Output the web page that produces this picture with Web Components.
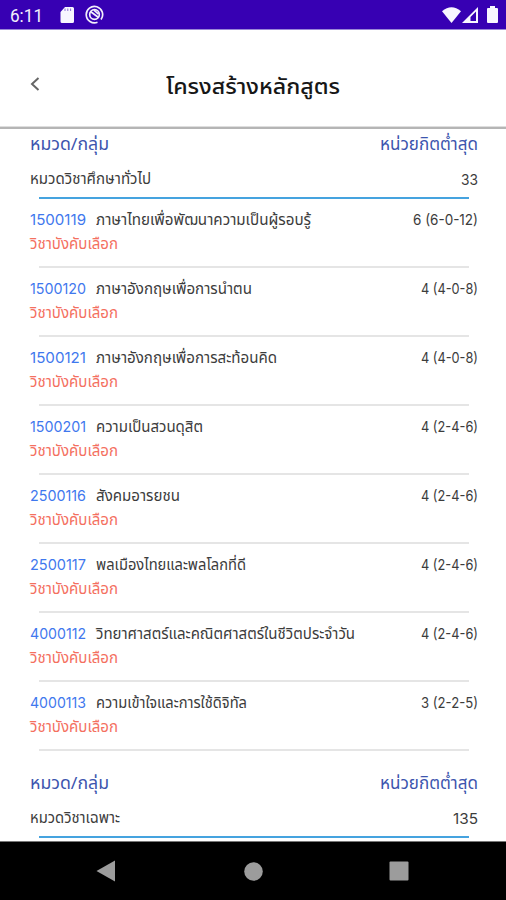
<!DOCTYPE html>
<html lang="th">
<head>
<meta charset="utf-8">
<title>โครงสร้างหลักสูตร</title>
<style>
html,body{margin:0;background:#fff}
body{width:506px;height:900px;overflow:hidden;font-family:"Noto Sans Thai","Noto Sans",Lato,sans-serif}
</style>
</head>
<body>
<course-app></course-app>
<script>
const define=(name,html,init)=>customElements.define(name,class extends HTMLElement{
  constructor(){super();this.attachShadow({mode:'open'})}
  connectedCallback(){this.shadowRoot.innerHTML=typeof html==='function'?html(this):html;if(init)init(this)}
});

/* A single line of text that is condensed or widened to the width in its "w" attribute. */
define('fit-text',`<style>:host{display:block;flex:none;white-space:nowrap;height:24px;line-height:24px}
span{display:inline-block;transform-origin:0 50%}</style><span></span>`,el=>{
  const s=el.shadowRoot.querySelector('span');s.textContent=el.getAttribute('t');
  const w=+el.getAttribute('w');el.style.width=w+'px';
  s.style.transform=`scaleX(${w/s.getBoundingClientRect().width})`;
});

define('status-bar',`<style>:host{display:flex;height:29px;background:#3700b3;border-bottom:1px solid #9a87d6;align-items:center;padding:0 8px 0 10px;color:#f2effb;font:17.5px Roboto,sans-serif}
svg{display:block;fill:#f8f6ff}.sd{margin:1px 0 0 17px}.n{margin-left:11px}.w{margin-left:auto}.s{margin:1px 0 0 1px}.b{margin-left:9px}fit-text{margin-top:2px}</style>
<fit-text t="6:11" w="33"></fit-text>
<svg class="sd" width="14" height="16" viewBox="0 0 14 16"><path d="M5 0h7.500A1.500 1.500 0 0 1 14 1.500V14.500a1.500 1.500 0 0 1-1.500 1.500H2A1.500 1.500 0 0 1 .5 14.500V5z"/><path d="M5 1.500v2.500M7.800 1.500v2.500M10.600 1.500v2.500" stroke="#8d70d6" stroke-width="1"/></svg>
<svg class="n" width="19" height="19" viewBox="0 0 19 19" style="fill:none;stroke:#f2effb;stroke-width:1.700"><path d="M12.500 17.200A8.200 8.200 0 1 1 16 14.500"/><circle cx="9.500" cy="9.500" r="4.800"/><path d="M5.500 6.500l8 6M9 5.200l4.500 4"/></svg>
<svg class="w" width="19" height="16" viewBox="0 0 19 16"><path d="M9.500 16L0 4.300Q9.500-3.800 19 4.300z"/></svg>
<svg class="s" width="16" height="16" viewBox="0 0 16 16"><path fill-rule="evenodd" d="M0 16L16 0V16zM8.500 14H14V4.500L8.500 10z"/></svg>
<svg class="b" width="11" height="17" viewBox="0 0 11 17"><path d="M3 0h5v2h2q1 0 1 1v13q0 1-1 1H1q-1 0-1-1V3q0-1 1-1h2z"/></svg>`);

define('title-bar',`<style>:host{display:grid;grid-template-columns:40px 1fr 40px;box-sizing:border-box;height:99px;border-bottom:2px solid #b5b5b5;align-items:start;padding:0 28px;color:#171717;font-size:22px;font-weight:500;box-shadow:inset 0 -1px #dedede}
svg{margin-top:46px;display:block}fit-text{margin:46px 0 0 98px}</style>
<svg width="13" height="16" viewBox="0 0 13 16"><path d="M10.500 2L4 8l6.500 6" fill="none" stroke="#666" stroke-width="2"/></svg>
<fit-text t="โครงสร้างหลักสูตร" w="174"></fit-text>`);

define('group-head',e=>`<style>:host{display:block;height:70px;padding:0 28px 0 30px;box-sizing:border-box}
div{display:flex;justify-content:space-between}.a{color:#3d55ae;font-size:17px;padding-top:4px}.b{color:#3c3c3c;font-size:15px;padding-top:11px}
.r{font-family:Inter,sans-serif;font-size:14.5px}
hr{border:0;height:2px;margin:5px 9px 0 9px;background:#45a3df}</style>
<div class="a"><fit-text t="หมวด/กลุ่ม" w="79"></fit-text><fit-text t="หน่วยกิตต่ำสุด" w="98"></fit-text></div>
<div class="b"><fit-text t="${e.getAttribute('name')}" w="${e.getAttribute('nw')}"></fit-text><fit-text class="r" t="${e.getAttribute('credit')}" w="${e.getAttribute('cw')}"></fit-text></div><hr>`);

define('course-row',e=>`<style>:host{display:block;height:69px;padding:10px 28px 0 30px;box-sizing:border-box;font-size:15px}
div{display:flex;color:#3c3c3c}.c{color:#3f78ee;margin-right:10px}.r{margin-left:auto}.k{color:#f4705f}
hr{border:0;height:2px;margin:9px 9px 0 9px;background:#e5e5e5}.c,.r{font-family:Inter,sans-serif;font-size:14.5px;margin-top:-1px}</style>
<div><fit-text class="c" t="${e.getAttribute('code')}" w="56"></fit-text><fit-text t="${e.getAttribute('name')}" w="${e.getAttribute('nw')}"></fit-text><fit-text class="r" t="${e.getAttribute('credit')}" w="${e.getAttribute('cw')}"></fit-text></div>
<div><fit-text class="k" t="วิชาบังคับเลือก" w="88"></fit-text></div><hr>`);

define('nav-bar',`<style>:host{display:flex;height:59px;background:#000;border-top:1px solid #777;box-sizing:border-box;align-items:center;padding:0 97px 0 96px;justify-content:space-between}svg{display:block;fill:#9c9c9c}</style>
<svg width="19" height="22" viewBox="0 0 19 22"><path d="M19 .5v21L.5 11z"/></svg>
<svg width="19" height="19" viewBox="0 0 19 19" style="margin-left:2px"><circle cx="9.500" cy="9.500" r="9.300"/></svg>
<svg width="20" height="20" viewBox="0 0 20 20"><rect x=".5" y=".5" width="19" height="19" rx="1"/></svg>`);

const rows=[['1500119','ภาษาไทยเพื่อพัฒนาความเป็นผู้รอบรู้',215,'6 (6-0-12)',65],['1500120','ภาษาอังกฤษเพื่อการนำตน',156,'4 (4-0-8)',57],['1500121','ภาษาอังกฤษเพื่อการสะท้อนคิด',181,'4 (4-0-8)',57],['1500201','ความเป็นสวนดุสิต',107,'4 (2-4-6)',57],['2500116','สังคมอารยชน',84,'4 (2-4-6)',57],['2500117','พลเมืองไทยและพลโลกที่ดี',150,'4 (2-4-6)',57],['4000112','วิทยาศาสตร์และคณิตศาสตร์ในชีวิตประจำวัน',259,'4 (2-4-6)',57],['4000113','ความเข้าใจและการใช้ดิจิทัล',151,'3 (2-2-5)',57]];
define('course-app',()=>`<style>:host{display:flex;flex-direction:column;height:900px;width:506px;background:#fff}
main{flex:1;min-height:0;overflow:hidden}.second{margin-top:17px}</style>
<status-bar></status-bar><title-bar></title-bar><main>
<group-head name="หมวดวิชาศึกษาทั่วไป" nw="121" credit="33" cw="17"></group-head>
${rows.map(r=>`<course-row code="${r[0]}" name="${r[1]}" nw="${r[2]}" credit="${r[3]}" cw="${r[4]}"></course-row>`).join('')}
<group-head class="second" name="หมวดวิชาเฉพาะ" nw="90" credit="135" cw="25"></group-head>
</main><nav-bar></nav-bar>`);
</script>
</body>
</html>
